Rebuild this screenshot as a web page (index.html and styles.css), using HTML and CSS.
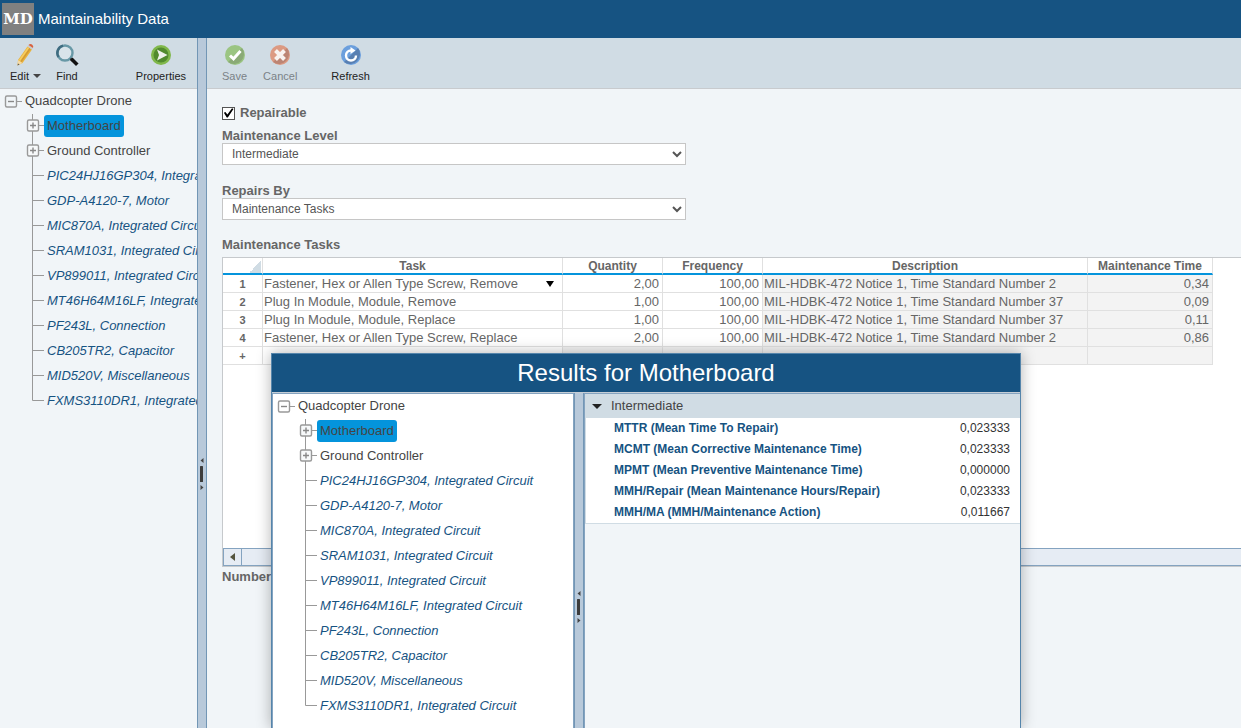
FILE: index.html
```html
<!DOCTYPE html>
<html lang="en">
<head>
<meta charset="utf-8">
<title>Maintainability Data</title>
<link rel="stylesheet" href="styles.css">
</head>
<body>
<svg class="symbols" aria-hidden="true">
  <symbol id="node-root" viewBox="0 0 22 25">
    <path d="M17 12.500H22" stroke="#999" fill="none"/>
    <rect x="5.500" y="7" width="11" height="11" rx="1.500" fill="none" stroke="#999" stroke-width="1.400"/>
    <path d="M8 12.500H14" stroke="#888" stroke-width="1.400"/>
  </symbol>
  <symbol id="node-plus" viewBox="0 0 44 25">
    <path d="M32.500 0V25M38 12.500H44" stroke="#999" fill="none"/>
    <rect x="27.500" y="7" width="11" height="11" rx="1.500" class="node-box" stroke="#999" stroke-width="1.400"/>
    <path d="M30 12.500H36M33 9.500V15.500" stroke="#888" stroke-width="1.400"/>
  </symbol>
  <symbol id="node-first" viewBox="0 0 44 25">
    <path d="M32.500 1V25M38 12.500H44" stroke="#999" fill="none"/>
    <rect x="27.500" y="7" width="11" height="11" rx="1.500" class="node-box" stroke="#999" stroke-width="1.400"/>
    <path d="M30 12.500H36M33 9.500V15.500" stroke="#888" stroke-width="1.400"/>
  </symbol>
  <symbol id="node-leaf" viewBox="0 0 44 25"><path d="M32.500 0V25M32.500 12.500H44" stroke="#999" fill="none"/></symbol>
  <symbol id="node-last" viewBox="0 0 44 25"><path d="M32.500 0V12.500H44" stroke="#999" fill="none"/></symbol>
</svg>

<header class="app-header">
  <span class="logo">MD</span>
  <h1 class="app-title">Maintainability Data</h1>
</header>

<div class="workspace">
  <aside class="sidebar">
    <div class="toolbar toolbar-side">
      <button type="button" class="tool">
        <svg class="tool-icon" width="22" height="24" viewBox="0 0 22 24"><path d="M4 17L13.500 3.500L18 6.500L8.500 20L3.500 22.500Z" fill="#e8b33c"/><path d="M7 18.500L16 5.500" stroke="#d39a35" stroke-width="1.500"/><path d="M5.500 17.500L14.500 4.500" stroke="#f6cd62" stroke-width="1.500"/><path d="M4 17L8.500 20L3.500 22.500Z" fill="#f3d9a5"/><path d="M4 20.500L5.500 21.500L3.500 22.500Z" fill="#555"/><path d="M13.500 3.500L14.500 2L19 5L18 6.500Z" fill="#c9ccd0"/><path d="M14.500 2Q16 .5 18 1.500Q20 3 19 5Z" fill="#d8623f"/></svg>
        <span class="tool-label">Edit <span class="caret"></span></span>
      </button>
      <button type="button" class="tool">
        <svg class="tool-icon" width="24" height="24" viewBox="0 0 24 24"><circle cx="10" cy="10" r="7.500" fill="#d8e4ea" stroke="#6798a6" stroke-width="2.400"/><path d="M3.500 14A7.500 7.500 0 0 1 8 2.700" fill="none" stroke="#3f6c80" stroke-width="2.400"/><path d="M15.500 15.500L18 18" stroke="#333" stroke-width="2"/><path d="M17.500 17L21 20.500" stroke="#111" stroke-width="3.600" stroke-linecap="square"/></svg>
        <span class="tool-label">Find</span>
      </button>
      <button type="button" class="tool tool-end">
        <svg class="tool-icon" width="24" height="24" viewBox="0 0 24 24"><circle cx="12" cy="12" r="10" fill="#80b84b"/><circle cx="12" cy="12" r="7.500" fill="#528b2e"/><path d="M8 6.500L18.500 12L8 17.500L10 12Z" fill="#eef2ea"/></svg>
        <span class="tool-label">Properties</span>
      </button>
    </div>
    <ul class="tree">
      <li><div class="node node-top"><svg width="22" height="25"><use href="#node-root"/></svg><span class="node-label">Quadcopter Drone</span></div>
        <ul>
          <li class="node"><svg width="44" height="25"><use href="#node-first"/></svg><span class="node-label selected">Motherboard</span></li>
          <li class="node"><svg width="44" height="25"><use href="#node-plus"/></svg><span class="node-label">Ground Controller</span></li>
          <li class="node"><svg width="44" height="25"><use href="#node-leaf"/></svg><span class="node-label part">PIC24HJ16GP304, Integrated Circuit</span></li>
          <li class="node"><svg width="44" height="25"><use href="#node-leaf"/></svg><span class="node-label part">GDP-A4120-7, Motor</span></li>
          <li class="node"><svg width="44" height="25"><use href="#node-leaf"/></svg><span class="node-label part">MIC870A, Integrated Circuit</span></li>
          <li class="node"><svg width="44" height="25"><use href="#node-leaf"/></svg><span class="node-label part">SRAM1031, Integrated Circuit</span></li>
          <li class="node"><svg width="44" height="25"><use href="#node-leaf"/></svg><span class="node-label part">VP899011, Integrated Circuit</span></li>
          <li class="node"><svg width="44" height="25"><use href="#node-leaf"/></svg><span class="node-label part">MT46H64M16LF, Integrated Circuit</span></li>
          <li class="node"><svg width="44" height="25"><use href="#node-leaf"/></svg><span class="node-label part">PF243L, Connection</span></li>
          <li class="node"><svg width="44" height="25"><use href="#node-leaf"/></svg><span class="node-label part">CB205TR2, Capacitor</span></li>
          <li class="node"><svg width="44" height="25"><use href="#node-leaf"/></svg><span class="node-label part">MID520V, Miscellaneous</span></li>
          <li class="node"><svg width="44" height="25"><use href="#node-last"/></svg><span class="node-label part">FXMS3110DR1, Integrated Circuit</span></li>
        </ul>
      </li>
    </ul>
  </aside>

  <div class="splitter splitter-main"><svg width="6" height="34" viewBox="0 0 6 34"><path d="M4.500 1V6L1.500 3.500ZM1.500 28V33L4.500 30.500Z" fill="#444"/><rect x="1" y="9" width="3" height="16" rx=".5" fill="#3c3c3c"/></svg></div>

  <main class="content">
    <div class="toolbar toolbar-main">
      <button type="button" class="tool" disabled>
        <svg class="tool-icon" width="24" height="24" viewBox="0 0 24 24"><circle cx="12" cy="12" r="10" fill="#9bc582"/><path d="M19 5A10 10 0 0 1 5 19Z" fill="#8aaa76"/><path d="M7 12.500L10.500 15.800L17.500 8" fill="none" stroke="#fff" stroke-width="3"/></svg>
        <span class="tool-label">Save</span>
      </button>
      <button type="button" class="tool" disabled>
        <svg class="tool-icon" width="24" height="24" viewBox="0 0 24 24"><circle cx="12" cy="12" r="10" fill="#dc9a82"/><path d="M19 5A10 10 0 0 1 5 19Z" fill="#bc8574"/><path d="M7.500 7.500L16.500 16.500M16.500 7.500L7.500 16.500" stroke="#f8f2ef" stroke-width="4"/></svg>
        <span class="tool-label">Cancel</span>
      </button>
      <button type="button" class="tool tool-spaced">
        <svg class="tool-icon" width="24" height="24" viewBox="0 0 24 24"><circle cx="12" cy="12" r="10" fill="#6b9fdd"/><path d="M19 5A10 10 0 0 1 5 19Z" fill="#587fb1"/><path d="M12 7.500A5 5 0 1 0 17 12.500" fill="none" stroke="#fff" stroke-width="2.400"/><path d="M11.500 4L16.500 7.500L11.500 11Z" fill="#fff"/></svg>
        <span class="tool-label">Refresh</span>
      </button>
    </div>

    <form class="form">
      <label class="check"><input type="checkbox" checked>Repairable</label>
      <div class="field">
        <label for="level">Maintenance Level</label>
        <select id="level"><option>Intermediate</option></select>
      </div>
      <div class="field">
        <label for="repairs">Repairs By</label>
        <select id="repairs"><option>Maintenance Tasks</option></select>
      </div>
      <h2 class="grid-title">Maintenance Tasks</h2>
      <div class="grid">
        <div class="grid-view">
          <table class="tasks">
            <colgroup><col class="c-num"><col class="c-task"><col class="c-qty"><col class="c-qty"><col class="c-desc"><col class="c-time"></colgroup>
            <thead><tr><th><span class="corner"></span></th><th>Task</th><th>Quantity</th><th>Frequency</th><th>Description</th><th>Maintenance Time</th></tr></thead>
            <tbody>
              <tr><th>1</th><td><span class="pick">Fastener, Hex or Allen Type Screw, Remove<span class="pick-arrow"></span></span></td><td class="num">2,00</td><td class="num">100,00</td><td class="ro">MIL-HDBK-472 Notice 1, Time Standard Number 2</td><td class="ro num">0,34</td></tr>
              <tr><th>2</th><td>Plug In Module, Module, Remove</td><td class="num">1,00</td><td class="num">100,00</td><td class="ro">MIL-HDBK-472 Notice 1, Time Standard Number 37</td><td class="ro num">0,09</td></tr>
              <tr><th>3</th><td>Plug In Module, Module, Replace</td><td class="num">1,00</td><td class="num">100,00</td><td class="ro">MIL-HDBK-472 Notice 1, Time Standard Number 37</td><td class="ro num">0,11</td></tr>
              <tr><th>4</th><td>Fastener, Hex or Allen Type Screw, Replace</td><td class="num">2,00</td><td class="num">100,00</td><td class="ro">MIL-HDBK-472 Notice 1, Time Standard Number 2</td><td class="ro num">0,86</td></tr>
              <tr><th>+</th><td></td><td class="ro"></td><td class="ro"></td><td class="ro"></td><td class="ro"></td></tr>
            </tbody>
          </table>
        </div>
        <div class="hscroll">
          <button type="button" class="hscroll-btn" aria-label="Scroll left"><svg width="5" height="8" viewBox="0 0 5 8"><path d="M5 0V8L0 4Z" fill="#55553f"/></svg></button>
          <div class="hscroll-thumb"></div>
        </div>
      </div>
      <h2 class="grid-title">Number</h2>
    </form>
  </main>
</div>

<section class="dialog" role="dialog" aria-labelledby="dialog-title">
  <h2 class="dialog-title" id="dialog-title">Results for Motherboard</h2>
  <div class="dialog-body">
    <div class="dialog-tree">
      <ul class="tree">
        <li><div class="node node-top"><svg width="22" height="25"><use href="#node-root"/></svg><span class="node-label">Quadcopter Drone</span></div>
          <ul>
            <li class="node"><svg width="44" height="25"><use href="#node-first"/></svg><span class="node-label selected">Motherboard</span></li>
            <li class="node"><svg width="44" height="25"><use href="#node-plus"/></svg><span class="node-label">Ground Controller</span></li>
            <li class="node"><svg width="44" height="25"><use href="#node-leaf"/></svg><span class="node-label part">PIC24HJ16GP304, Integrated Circuit</span></li>
            <li class="node"><svg width="44" height="25"><use href="#node-leaf"/></svg><span class="node-label part">GDP-A4120-7, Motor</span></li>
            <li class="node"><svg width="44" height="25"><use href="#node-leaf"/></svg><span class="node-label part">MIC870A, Integrated Circuit</span></li>
            <li class="node"><svg width="44" height="25"><use href="#node-leaf"/></svg><span class="node-label part">SRAM1031, Integrated Circuit</span></li>
            <li class="node"><svg width="44" height="25"><use href="#node-leaf"/></svg><span class="node-label part">VP899011, Integrated Circuit</span></li>
            <li class="node"><svg width="44" height="25"><use href="#node-leaf"/></svg><span class="node-label part">MT46H64M16LF, Integrated Circuit</span></li>
            <li class="node"><svg width="44" height="25"><use href="#node-leaf"/></svg><span class="node-label part">PF243L, Connection</span></li>
            <li class="node"><svg width="44" height="25"><use href="#node-leaf"/></svg><span class="node-label part">CB205TR2, Capacitor</span></li>
            <li class="node"><svg width="44" height="25"><use href="#node-leaf"/></svg><span class="node-label part">MID520V, Miscellaneous</span></li>
            <li class="node"><svg width="44" height="25"><use href="#node-last"/></svg><span class="node-label part">FXMS3110DR1, Integrated Circuit</span></li>
          </ul>
        </li>
      </ul>
    </div>
    <div class="splitter splitter-dialog"><svg width="6" height="34" viewBox="0 0 6 34"><path d="M4.500 1V6L1.500 3.500ZM1.500 28V33L4.500 30.500Z" fill="#444"/><rect x="1" y="9" width="3" height="16" rx=".5" fill="#3c3c3c"/></svg></div>
    <div class="results">
      <button type="button" class="results-head"><span class="results-caret"></span>Intermediate</button>
      <table class="results-list">
        <tbody>
          <tr><th>MTTR (Mean Time To Repair)</th><td>0,023333</td></tr>
          <tr><th>MCMT (Mean Corrective Maintenance Time)</th><td>0,023333</td></tr>
          <tr><th>MPMT (Mean Preventive Maintenance Time)</th><td>0,000000</td></tr>
          <tr><th>MMH/Repair (Mean Maintenance Hours/Repair)</th><td>0,023333</td></tr>
          <tr><th>MMH/MA (MMH/Maintenance Action)</th><td>0,011667</td></tr>
        </tbody>
      </table>
    </div>
  </div>
</section>
</body>
</html>
```
FILE: styles.css
```css
* { box-sizing: border-box; }

html, body { height: 100%; }

body {
  margin: 0;
  display: flex;
  flex-direction: column;
  overflow: hidden;
  background: #f1f5f8;
  color: #444;
  font: 13px/18px "Liberation Sans", Arial, sans-serif;
}

button, select, input { font: inherit; color: inherit; margin: 0; }
button { border: 0; padding: 0; background: none; }
h1, h2, ul { margin: 0; padding: 0; }
ul { list-style: none; }
.symbols { position: absolute; width: 0; height: 0; }

.app-header {
  display: flex;
  align-items: center;
  gap: 4px;
  height: 38px;
  flex: none;
  padding-left: 2px;
  background: #165382;
  color: #fff;
}
.logo {
  width: 32px;
  background: #808080;
  font: bold 15px/32px "DejaVu Serif", serif;
  text-align: center;
}
.app-title { font-size: 15px; font-weight: normal; }

.workspace { display: flex; flex: 1; min-height: 0; }
.sidebar { width: 197px; flex: none; overflow: hidden; }
.content { flex: 1; min-width: 0; display: flex; flex-direction: column; }

.toolbar {
  display: flex;
  align-items: flex-start;
  height: 51px;
  flex: none;
  padding-top: 5px;
  background: #d0dce4;
  border-bottom: 1px solid #c8cbce;
}
.toolbar-side { gap: 14px; padding-left: 10px; padding-right: 11px; }
.toolbar-main { gap: 16px; padding-left: 15px; }
.tool {
  display: flex;
  flex-direction: column;
  align-items: center;
  color: #222;
  font-size: 11px;
  line-height: 18px;
}
.tool:disabled { color: #7b8287; }
.tool-label { display: flex; align-items: center; gap: 4px; }
.tool-end { margin-left: auto; }
.tool-spaced { margin-left: 18px; }
.caret { border: 4px solid transparent; border-top-color: #444; border-bottom: 0; }

.node { display: flex; align-items: center; height: 25px; white-space: nowrap; }
.node svg { flex: none; }
.node-top { height: 24px; }
.node-box { fill: #f7f9fa; }
.node-label { padding: 0 3px; border-radius: 3px; line-height: 22px; }
.selected { background: #0494dc; }
.part { color: #165382; font-style: italic; }

.splitter {
  display: flex;
  justify-content: center;
  width: 10px;
  flex: none;
  background: #b8c9da;
  border: solid #7296b5;
  border-width: 0 1px;
}
.splitter-main { padding-top: 419px; }
.splitter-dialog { padding-top: 197px; }

.form {
  flex: 1;
  display: flex;
  flex-direction: column;
  padding: 15px 0 0 15px;
  color: #666;
}
.check { display: flex; align-items: center; gap: 5px; font-weight: bold; }
.check input {
  appearance: none;
  width: 13px;
  height: 13px;
  background: #fff;
  border: 1px solid #555;
}
.check input:checked::before {
  content: "";
  display: block;
  height: 11px;
  background: #000;
  clip-path: polygon(8% 48%, 22% 40%, 40% 64%, 82% 6%, 95% 14%, 44% 92%, 34% 92%);
}
.field { display: flex; flex-direction: column; max-width: 464px; margin-top: 5px; }
.field + .field { margin-top: 17px; }
.field label { padding-top: 1px; font-weight: bold; line-height: 15px; }
.field select {
  height: 22px;
  padding: 0 5px;
  background-color: #fff;
  border: 1px solid #c6c6c6;
  border-radius: 0;
  font-size: 12px;
  color: #555;
}
.grid-title { font-size: 13px; line-height: 18px; }
.field + .grid-title { margin-top: 16px; }

.grid {
  margin-top: 3px;
  margin-bottom: 1px;
  background: #fff;
  border: 1px solid #c6c9cc;
  border-right: 0;
}
.grid-view { height: 290px; overflow: hidden; }
.tasks { table-layout: fixed; width: 990px; border-collapse: separate; border-spacing: 0; }
.c-num { width: 40px; }
.c-task { width: 300px; }
.c-qty { width: 100px; }
.c-desc { width: 325px; }
.c-time { width: 125px; }
.tasks th, .tasks td {
  height: 18px;
  padding: 0 3px 0 1px;
  border: solid #e0e0e0;
  border-width: 0 1px 1px 0;
  line-height: 17px;
  white-space: nowrap;
  text-align: left;
}
.tasks th { padding: 0 1px; font-size: 12px; text-align: center; }
.tasks tbody th { padding-top: 1px; font-size: 11px; line-height: 16px; }
.tasks thead th { height: 17px; padding-top: 2px; line-height: 13px; border-bottom: 2px solid #0494dc; }
.tasks .num { text-align: right; }
.tasks .ro { background: #f3f3f3; }
.corner {
  display: block;
  width: 12px;
  height: 12px;
  margin-left: auto;
  background: linear-gradient(135deg, transparent 50%, #d0dce4 50%);
}
.pick { display: flex; align-items: center; justify-content: space-between; padding-right: 5px; }
.pick-arrow { border: 4px solid transparent; border-top: 6px solid #000; border-bottom: 0; }

.hscroll { display: flex; height: 18px; }
.hscroll-btn {
  display: flex;
  align-items: center;
  justify-content: center;
  width: 19px;
  background: #e6ecf4;
  border: 1px solid #84a3c0;
}
.hscroll-thumb { flex: 1; background: #e6ecf4; border: solid #84a3c0; border-width: 1px 0; }

.dialog {
  position: absolute;
  left: 271px;
  top: 353px;
  bottom: 0;
  width: 750px;
  display: flex;
  flex-direction: column;
  background: #f1f5f8;
  border: 1px solid #5585ab;
  border-bottom: 0;
  box-shadow: 0 0 14px rgba(0, 0, 0, 0.3);
}
.dialog-title {
  background: #165382;
  border-bottom: 1px solid #c6ced6;
  color: #fff;
  font-size: 24px;
  font-weight: normal;
  line-height: 38px;
  text-align: center;
}
.dialog-body { display: flex; flex: 1; min-height: 0; }
.dialog-tree {
  width: 302px;
  flex: none;
  overflow: hidden;
  background: #fff;
  border: 1px solid #84a3c0;
  border-bottom: 0;
}
.results {
  flex: 1;
  border: solid #84a3c0;
  border-width: 1px 0 0 1px;
}
.results-head {
  display: flex;
  align-items: center;
  gap: 9px;
  width: 100%;
  height: 24px;
  padding-left: 7px;
  background: #d0dce4;
}
.results-caret { border: 5px solid transparent; border-top-color: #222; border-bottom: 0; }
.results-list {
  width: 100%;
  border-spacing: 0;
  background: #fff;
  border: solid #d0dce4;
  border-width: 0 0 1px 1px;
  font-size: 12px;
}
.results-list th, .results-list td { height: 21px; padding: 0 10px 1px 28px; line-height: 20px; }
.results-list th { color: #165382; text-align: left; }
.results-list td { color: #333; text-align: right; }
```
